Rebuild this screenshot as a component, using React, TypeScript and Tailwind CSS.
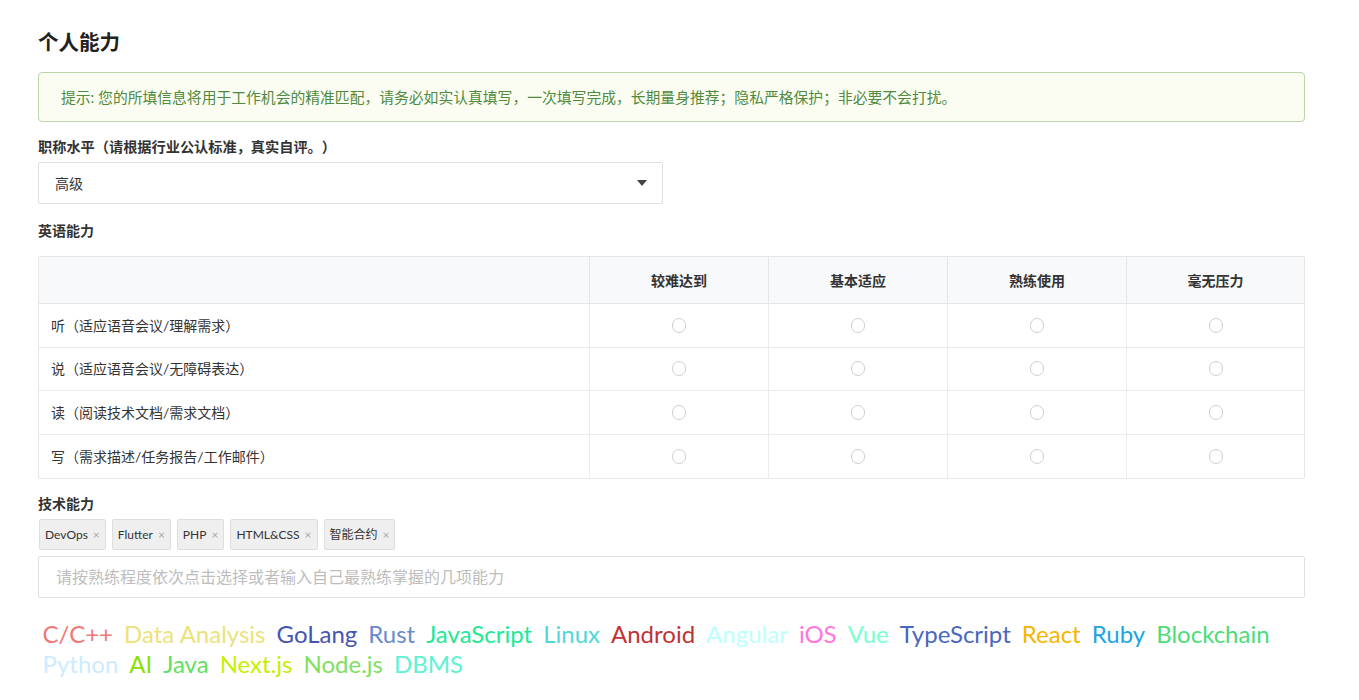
import { useState } from 'react'

const levels = ['较难达到', '基本适应', '熟练使用', '毫无压力']

const skills = [
  '听（适应语音会议/理解需求）',
  '说（适应语音会议/无障碍表达）',
  '读（阅读技术文档/需求文档）',
  '写（需求描述/任务报告/工作邮件）',
]

const tags = ['DevOps', 'Flutter', 'PHP', 'HTML&CSS', '智能合约']

// tag cloud words with their colours
const cloud: [string, string][] = [
  ['C/C++', '#f07878'],
  ['Data Analysis', '#ece27a'],
  ['GoLang', '#4655b2'],
  ['Rust', '#6a8bcb'],
  ['JavaScript', '#22e893'],
  ['Linux', '#4fd8da'],
  ['Android', '#c13434'],
  ['Angular', '#bcffff'],
  ['iOS', '#ff76e2'],
  ['Vue', '#7affcf'],
  ['TypeScript', '#4a67c0'],
  ['React', '#f7b500'],
  ['Ruby', '#1ca5e2'],
  ['Blockchain', '#4cdc78'],
  ['Python', '#cdeaff'],
  ['AI', '#8ae000'],
  ['Java', '#5fe060'],
  ['Next.js', '#c6ef00'],
  ['Node.js', '#7fe05e'],
  ['DBMS', '#60f2d2'],
]

function Radio({ checked, onClick }: { checked: boolean; onClick: () => void }) {
  return (
    <button
      onClick={onClick}
      className={`w-[14px] h-[15px] rounded-full border ${checked ? 'border-[#4a8b3b]' : 'border-[#cfcfcf]'} bg-white flex items-center justify-center`}
    >
      {checked && <span className="w-[6px] h-[6px] rounded-full bg-[#4a8b3b]" />}
    </button>
  )
}

export default function App() {
  const [answers, setAnswers] = useState<Record<number, number>>({})

  return (
    <div
      className="min-h-screen bg-white text-[#333] [text-spacing-trim:space-all]"
      style={{ fontFamily: 'Lato, "Noto Sans CJK SC", sans-serif' }}
    >
      <div className="ml-[38px] w-[1267px] pt-[28px]">
        <h2 className="text-[20.5px] leading-[28px] font-bold text-[#222]">个人能力</h2>

        {/* Tip */}
        <div className="mt-4 rounded border border-[#bcd5aa] bg-[#fbfdf2] px-[22px] py-[14px] text-[14.8px] leading-[20px] text-[#4f8a3f]">
          提示: 您的所填信息将用于工作机会的精准匹配，请务必如实认真填写，一次填写完成，长期量身推荐；隐私严格保护；非必要不会打扰。
        </div>

        <div className="mt-[15px] text-[14.2px] leading-[20px] font-semibold text-[#333]">
          职称水平（请根据行业公认标准，真实自评。）
        </div>
        <div className="mt-[5px] w-[625px] h-[42px] border border-[#e0e0e0] rounded-[2px] flex items-center justify-between pl-[16px] pr-[15px] text-[14px]">
          <span>高级</span>
          <svg width="10" height="6" viewBox="0 0 10 6">
            <path d="M0 0h10L5 6z" fill="#444" />
          </svg>
        </div>

        <div className="mt-[17px] text-[14px] leading-[20px] font-semibold text-[#333]">英语能力</div>

        {/* English table */}
        <div className="mt-[15px] border border-[#e6e6e6] rounded-[2px] text-[14px]">
          <div className="grid grid-cols-[550px_179px_179px_179px_178px] h-[47px] bg-[#f8f9fa] border-b border-[#e6e6e6]">
            <div />
            {levels.map((l) => (
              <div key={l} className="border-l border-[#e6e6e6] flex items-center justify-center font-semibold text-[#333]">
                {l}
              </div>
            ))}
          </div>
          {skills.map((s, i) => (
            <div
              key={s}
              className={`grid grid-cols-[550px_179px_179px_179px_178px] h-[43.5px] ${i < skills.length - 1 ? 'border-b border-[#ececec]' : ''}`}
            >
              <div className="flex items-center pl-[12px] text-[#333]">{s}</div>
              {levels.map((_, j) => (
                <div key={j} className="border-l border-[#ececec] flex items-center justify-center">
                  <Radio checked={answers[i] === j} onClick={() => setAnswers({ ...answers, [i]: j })} />
                </div>
              ))}
            </div>
          ))}
        </div>

        <div className="mt-[15px] text-[14px] leading-[20px] font-semibold text-[#333]">技术能力</div>

        <div className="mt-[5px] flex gap-[6px] pl-px">
          {tags.map((t) => (
            <span
              key={t}
              className="h-[31px] flex items-center gap-[5px] pl-[5px] pr-[5px] bg-[#efefef] border border-[#dedede] rounded-[2px] text-[12px] text-[#333]"
            >
              {t}
              <span className="text-[12px] text-[#aaa]">×</span>
            </span>
          ))}
        </div>

        <div className="mt-[6px] h-[42px] border border-[#e0e0e0] rounded-[2px] flex items-center pl-[17px] text-[16px] text-[#bdbdbd]">
          请按熟练程度依次点击选择或者输入自己最熟练掌握的几项能力
        </div>

        {/* Tag cloud */}
        <div className="mt-[21px] -ml-px flex flex-wrap w-full text-[24px] leading-[30px]">
          {cloud.map(([w, c]) => (
            <span key={w} className="mx-[5.5px] cursor-pointer" style={{ color: c }}>
              {w}
            </span>
          ))}
        </div>
      </div>
    </div>
  )
}
